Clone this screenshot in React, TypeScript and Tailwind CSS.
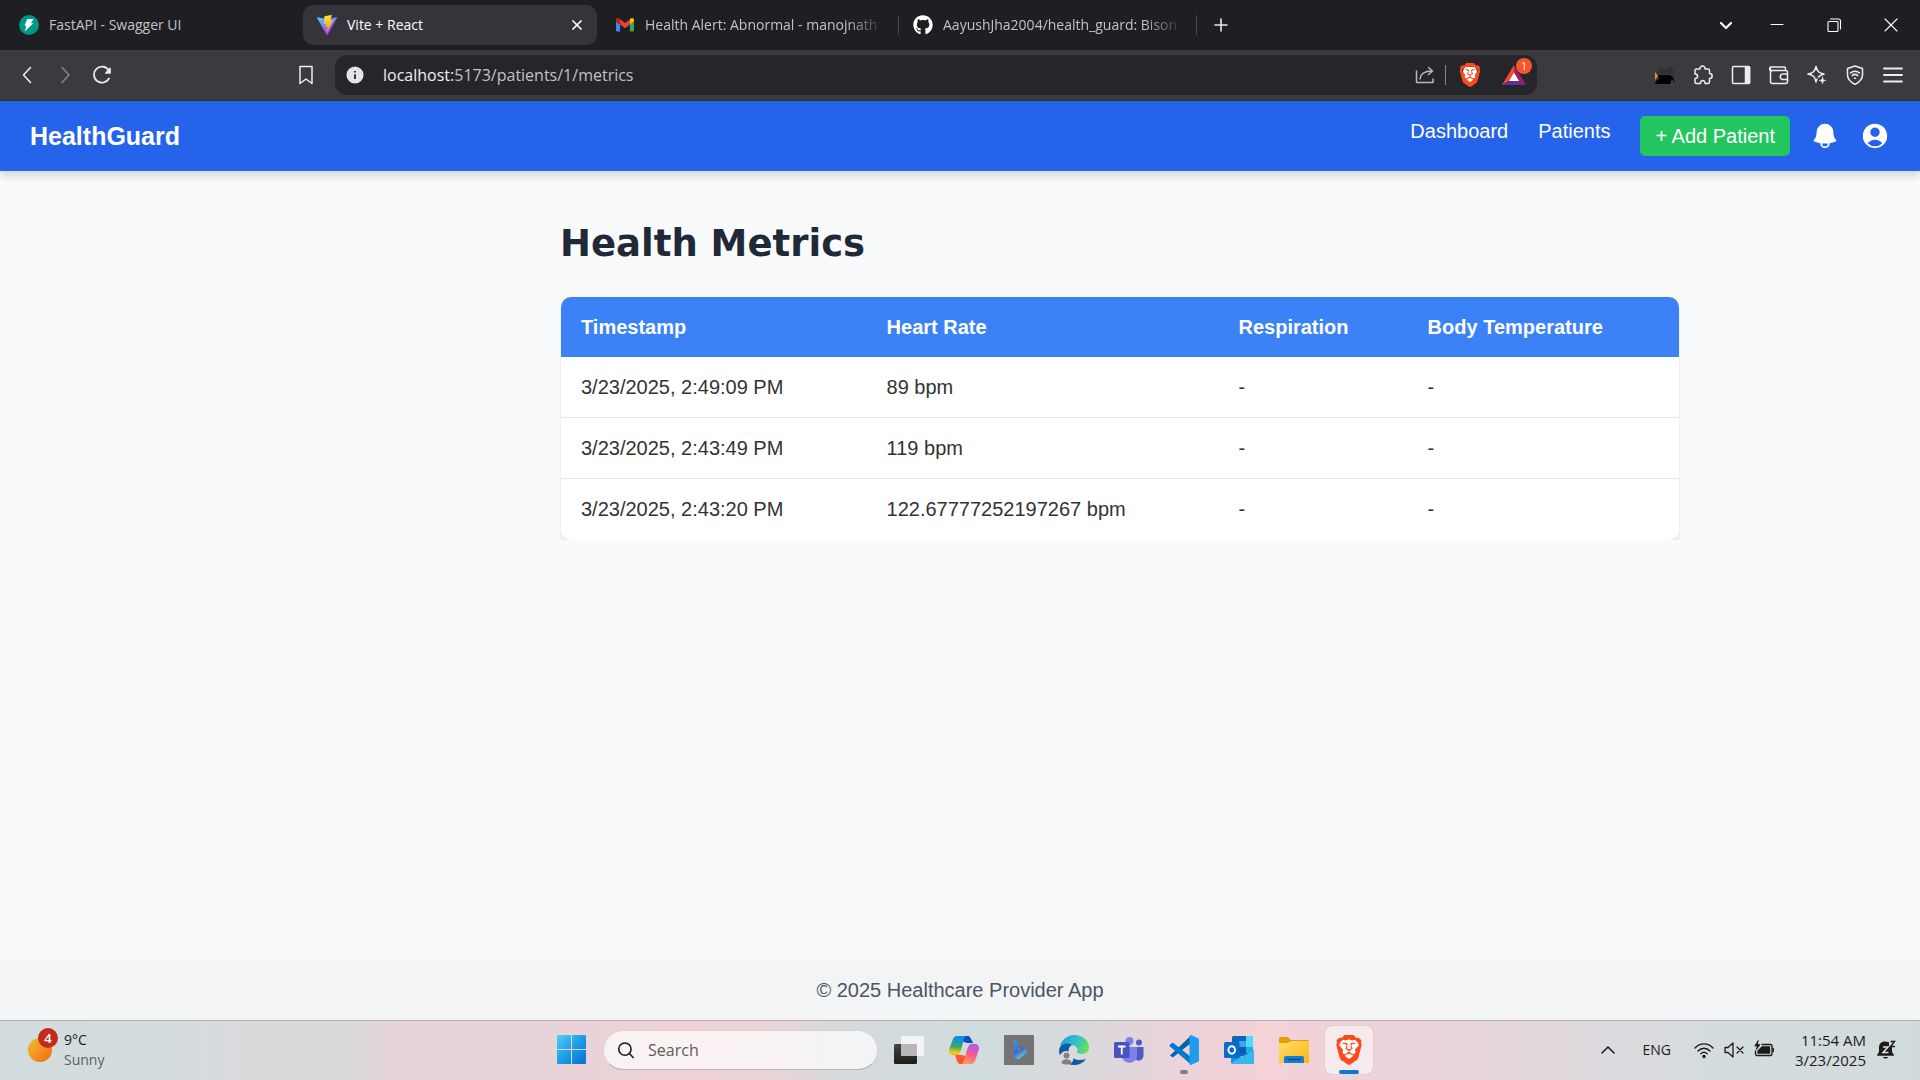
import React from "react";
import { HiBell, HiUserCircle } from "react-icons/hi2";
import { FaGithub } from "react-icons/fa";
import { SiBrave } from "react-icons/si";

const metrics = [
  { time: "3/23/2025, 2:49:09 PM", heart: "89 bpm", respiration: "-", temperature: "-" },
  { time: "3/23/2025, 2:43:49 PM", heart: "119 bpm", respiration: "-", temperature: "-" },
  { time: "3/23/2025, 2:43:20 PM", heart: "122.67777252197267 bpm", respiration: "-", temperature: "-" },
];

type StrokeProps = {
  children: React.ReactNode;
  className?: string;
  width?: number;
};

function Stroke({ children, className = "size-5", width = 1.5 }: StrokeProps) {
  return (
    <svg
      viewBox="0 0 20 20"
      className={className}
      fill="none"
      stroke="currentColor"
      strokeWidth={width}
      strokeLinecap="round"
      strokeLinejoin="round"
      aria-hidden="true"
    >
      {children}
    </svg>
  );
}

function FastApiLogo() {
  return (
    <svg viewBox="0 0 20 20" className="size-5" aria-hidden="true">
      <circle cx="10" cy="10" r="10" fill="#009688" />
      <path d="M8.2 4h6.6l-3 4.2h2.6L5.6 16.4l1.8-5.6H5.6z" fill="#fff" />
    </svg>
  );
}

function ViteLogo() {
  return (
    <svg viewBox="0 0 256 257" className="size-5" aria-hidden="true">
      <defs>
        <linearGradient id="viteBody" x1="0" y1="0.08" x2="0.6" y2="0.9">
          <stop offset="0" stopColor="#41D1FF" />
          <stop offset="1" stopColor="#BD34FE" />
        </linearGradient>
        <linearGradient id="viteBolt" x1="0.43" y1="0" x2="0.5" y2="0.9">
          <stop offset="0" stopColor="#FFEA83" />
          <stop offset="0.1" stopColor="#FFDD35" />
          <stop offset="1" stopColor="#FFA800" />
        </linearGradient>
      </defs>
      <path
        fill="url(#viteBody)"
        d="M255.153 37.938L134.897 252.976c-2.483 4.44-8.862 4.466-11.382.048L.875 37.958c-2.746-4.814 1.371-10.646 6.827-9.67l120.385 21.517a6.537 6.537 0 0 0 2.322-.004l117.867-21.483c5.438-.991 9.574 4.796 6.877 9.62Z"
      />
      <path
        fill="url(#viteBolt)"
        d="M185.432.063L96.44 17.501a3.268 3.268 0 0 0-2.634 3.014l-5.474 92.456a3.268 3.268 0 0 0 3.997 3.378l24.777-5.718c2.318-.535 4.413 1.507 3.936 3.838l-7.361 36.047c-.495 2.426 1.782 4.5 4.151 3.78l15.304-4.649c2.372-.72 4.652 1.36 4.15 3.788l-11.698 56.621c-.732 3.542 3.979 5.473 5.943 2.437l1.313-2.028l72.516-144.72c1.215-2.423-.88-5.186-3.54-4.672l-25.505 4.922c-2.396.462-4.435-1.77-3.759-4.114l16.646-57.705c.677-2.35-1.37-4.583-3.769-4.113Z"
      />
    </svg>
  );
}

function GmailLogo() {
  return (
    <svg viewBox="52 42 88 66" className="w-[18px]" aria-hidden="true">
      <path fill="#4285f4" d="M58 108h14V74L52 59v43c0 3.32 2.69 6 6 6" />
      <path fill="#34a853" d="M120 108h14c3.32 0 6-2.69 6-6V59l-20 15" />
      <path fill="#fbbc04" d="M120 48v26l20-15v-8c0-7.42-8.47-11.65-14.4-7.2" />
      <path fill="#ea4335" d="M72 74V48l24 18 24-18v26L96 92" />
      <path fill="#c5221f" d="M52 51v8l20 15V48l-5.6-4.2c-5.94-4.45-14.4-.22-14.4 7.2" />
    </svg>
  );
}

function BraveLogo({ large = false }: { large?: boolean }) {
  return (
    <span className={large ? "grid size-[30px] place-items-center" : "grid size-6 place-items-center"}>
      <svg viewBox="0 0 24 24" className="col-start-1 row-start-1 size-full" aria-hidden="true">
        <path d="M7 4h10l2 4-1.500 9L12 21l-5.500-4L5 8z" fill="#fff" />
      </svg>
      <SiBrave className="col-start-1 row-start-1 size-full text-[#fb4b1b]" aria-hidden="true" />
    </span>
  );
}

type TabProps = {
  icon: React.ReactNode;
  title: string;
  active?: boolean;
  faded?: boolean;
  divider?: boolean;
};

function Tab({ icon, title, active = false, faded = false, divider = false }: TabProps) {
  return (
    <div
      className={
        active
          ? "flex h-10 w-[294px] items-center gap-2.5 rounded-[10px] bg-[#35343a] pl-[14px] pr-2.5 text-white"
          : "relative flex h-10 w-[294px] items-center gap-2.5 pl-[14px] pr-2.5 text-[#c3c2c7]"
      }
    >
      <span className="grid w-5 shrink-0 place-items-center">{icon}</span>
      <span
        className={
          faded
            ? "flex-1 overflow-hidden whitespace-nowrap [mask-image:linear-gradient(to_right,black_84%,transparent)]"
            : "flex-1 overflow-hidden whitespace-nowrap"
        }
      >
        {title}
      </span>
      {active && (
        <button aria-label="Close tab" className="grid size-5 place-items-center">
          <Stroke className="size-4" width={2.2}>
            <path d="M5 5l10 10M15 5L5 15" />
          </Stroke>
        </button>
      )}
      {divider && <span className="absolute -right-1 h-5 w-px bg-[#46454b]" />}
    </div>
  );
}

function TabStrip() {
  return (
    <div className="flex h-[50px] items-center bg-[#1f1e23] pl-[5px] text-sm text-[#e8e8ea]">
      <div className="flex items-center gap-1">
        <Tab icon={<FastApiLogo />} title="FastAPI - Swagger UI" />
        <Tab icon={<ViteLogo />} title="Vite + React" active />
        <Tab icon={<GmailLogo />} title="Health Alert: Abnormal - manojnath" faded divider />
        <Tab icon={<FaGithub className="size-5 text-white" />} title="AayushJha2004/health_guard: Bison" faded divider />
        <button aria-label="New tab" className="ml-2.5 grid size-7 place-items-center">
          <Stroke className="size-5" width={1.6}>
            <path d="M10 4v12M4 10h12" />
          </Stroke>
        </button>
      </div>
      <div className="ml-auto flex items-center text-white">
        <button aria-label="Search tabs" className="grid w-11 place-items-center">
          <Stroke width={2.2}>
            <path d="M5 8l5 5 5-5" />
          </Stroke>
        </button>
        <button aria-label="Minimize" className="grid w-[58px] place-items-center">
          <Stroke width={1.1}>
            <path d="M4 9.500h12" />
          </Stroke>
        </button>
        <button aria-label="Restore" className="grid w-14 place-items-center">
          <Stroke width={1.1}>
            <rect x="4" y="6.500" width="10" height="10" rx="1" />
            <path d="M6.500 4H14.500a2 2 0 0 1 2 2v8" />
          </Stroke>
        </button>
        <button aria-label="Close" className="grid w-[58px] place-items-center">
          <Stroke width={1.1}>
            <path d="M4 4l12 12M16 4L4 16" />
          </Stroke>
        </button>
      </div>
    </div>
  );
}

function AddressBar() {
  return (
    <div className="flex h-10 flex-1 items-center rounded-xl bg-[#26252a] px-[11px]">
      <svg viewBox="0 0 20 20" className="size-[18px] shrink-0" aria-hidden="true">
        <circle cx="10" cy="10" r="9.500" fill="#e4e3e8" />
        <path d="M10 9.200v5.300M10 5.500v1.600" stroke="#26252a" strokeWidth="2" />
      </svg>
      <p className="ml-[19px] flex-1 whitespace-nowrap text-base text-[#c3c2c7]">
        <span className="text-[#f0f0f3]">localhost:</span>5173/patients/1/metrics
      </p>
      <button aria-label="Share" className="text-[#b9b8bd]">
        <Stroke>
          <path d="M1.500 6v11.500h16.500V14M5 14c.5-5 3.500-8 12-8M13.500 2.500L17.500 6l-4 3.500" />
        </Stroke>
      </button>
      <span className="ml-2.5 h-5 w-px bg-[#87868b]" />
      <button aria-label="Brave Shields" className="ml-3">
        <BraveLogo />
      </button>
      <button aria-label="Brave Rewards, 1 notification" className="relative ml-5">
        <svg viewBox="0 0 24 22" className="w-6" aria-hidden="true">
          <path d="M12 1L0 21l7-4 5-8.500z" fill="#ff4724" />
          <path d="M12 1l12 20-7-4-5-8.500z" fill="#9e1f63" />
          <path d="M0 21h24l-7-4.500H7z" fill="#662d91" />
          <path d="M12 8.500L17 17H7z" fill="#fff" />
        </svg>
        <span className="absolute -right-1.5 -top-1.5 grid size-4 place-items-center rounded-full bg-[#fb542b] text-[10px] leading-none text-white">
          1
        </span>
      </button>
    </div>
  );
}

function Toolbar() {
  return (
    <div className="flex h-[51px] items-center border-b border-[#2f2e33] bg-[#3b3a3f] text-[#ededf0]">
      <div className="flex items-center gap-[18px] pl-[17px]">
        <button aria-label="Back">
          <Stroke width={1.6}>
            <path d="M13.500 2.500L6.500 10l7 7.500" />
          </Stroke>
        </button>
        <button aria-label="Forward" className="text-[#85848a]">
          <Stroke width={1.6}>
            <path d="M7 2.500l7 7.500-7 7.500" />
          </Stroke>
        </button>
        <button aria-label="Reload">
          <Stroke width={1.7}>
            <path d="M16 13.500A8 8 0 1 1 15.500 5" />
            <path d="M17 3.500v4.500h-4z" fill="currentColor" />
          </Stroke>
        </button>
      </div>
      <button aria-label="Bookmark this tab" className="ml-[183px] mr-[19px]">
        <Stroke width={1.5}>
          <path d="M4 1.500h12v17L10 14l-6 4.500z" />
        </Stroke>
      </button>
      <AddressBar />
      <div className="ml-[118px] mr-[17px] flex items-center gap-[18px]">
        <button aria-label="Extension">
          <svg viewBox="0 0 20 20" className="size-5" aria-hidden="true">
            <path d="M1 8l5-5 4 2 5-3 3 3 2 4H2z" fill="#313134" />
            <path d="M0 7l3 4-3 4z" fill="#f28c1c" />
            <path d="M3 10h12l3 2 2 6-3-4-2 5H0l1-3 3-2z" fill="#000" />
          </svg>
        </button>
        <button aria-label="Extensions">
          <Stroke>
            <path d="M2 5.500a1.500 1.500 0 0 1 1.500-1.500H7c-.5-4 5.500-4 5 0h3a1.500 1.500 0 0 1 1.500 1.500v3c3.500 0 3.500 5 0 5v3.500a1.500 1.500 0 0 1-1.500 1.500h-3c.5-4-5-4-4.500 0h-4A1.500 1.500 0 0 1 2 17v-3.500c3.500 0 3.500-4.500 0-4.500z" />
          </Stroke>
        </button>
        <button aria-label="Sidebar">
          <Stroke>
            <rect x="1.500" y="1.500" width="17" height="17" rx="1" />
            <path d="M14.500 2h4v16h-4z" fill="currentColor" />
          </Stroke>
        </button>
        <button aria-label="Wallet">
          <Stroke>
            <path d="M1.500 3.500v13a2 2 0 0 0 2 2h13a2 2 0 0 0 2-2V7.500a2 2 0 0 0-2-2h-13a2 2 0 1 1 0-3.500H15a1.500 1.500 0 0 1 1.500 1.500v2M18.500 9h-5a2.800 2.800 0 0 0 0 5.500h5" />
          </Stroke>
        </button>
        <button aria-label="Leo AI">
          <Stroke>
            <path d="M9 1.500c1 5 3 6.500 8 7.500-3 .8-4.500 1.500-5.500 3M9 1.500C8 6.500 6 8 1 9c5 1 7 2.500 8 8 .3-1 .5-2 1-3" />
            <path d="M15.500 12c.3 2.500 1 3.200 3.500 3.500-2.500.3-3.200 1-3.500 3.500-.3-2.500-1-3.200-3.500-3.500 2.500-.3 3.200-1 3.500-3.500z" fill="currentColor" strokeWidth="0.5" />
          </Stroke>
        </button>
        <button aria-label="VPN">
          <Stroke>
            <path d="M10 1l7.500 2.500v6.500c0 4-3 7-7.500 9.500C5.500 17 2.500 14 2.500 10V3.500z" />
            <path d="M5.500 8c2.500-2.300 6.500-2.300 9 0M7.200 10.600c1.600-1.400 4-1.400 5.600 0M9.500 13.200h1" />
          </Stroke>
        </button>
        <button aria-label="Menu">
          <Stroke width={1.8}>
            <path d="M1 3.500h18M1 10h18M1 16.500h18" />
          </Stroke>
        </button>
      </div>
    </div>
  );
}

function SiteHeader() {
  return (
    <header className="flex h-[70px] items-center justify-between bg-[#2563eb] px-[30px] text-white shadow-[0_5px_8px_rgba(0,0,0,0.14)]">
      <a href="#home" className="text-[25px] font-bold leading-[35px]">
        HealthGuard
      </a>
      <div className="flex items-center gap-5">
        <nav className="flex items-start gap-[30px] text-xl leading-[30px]">
          <a href="#dashboard">Dashboard</a>
          <a href="#patients">Patients</a>
          <button className="h-10 rounded-[5px] bg-[#22c55e] px-[15px] leading-10">+ Add Patient</button>
        </nav>
        <button aria-label="Notifications">
          <HiBell className="size-[30px]" />
        </button>
        <button aria-label="Account">
          <HiUserCircle className="size-[30px]" />
        </button>
      </div>
    </header>
  );
}

function MetricsTable() {
  return (
    <div className="overflow-hidden px-px">
      <table className="w-full border-separate border-spacing-0 overflow-hidden rounded-[10px] bg-white text-left text-xl leading-[30px] text-[#333] shadow-lg">
        <thead className="bg-[#3b82f6] text-white">
          <tr>
            {["Timestamp", "Heart Rate", "Respiration", "Body Temperature"].map((label) => (
              <th key={label} scope="col" className="px-5 py-[15px] font-bold">
                {label}
              </th>
            ))}
          </tr>
        </thead>
        <tbody>
          {metrics.map((row) => (
            <tr key={row.time} className="border-[#e5e7eb] last:border-transparent *:border-b *:border-inherit *:px-5 *:py-[15px]">
              <td>{row.time}</td>
              <td>{row.heart}</td>
              <td>{row.respiration}</td>
              <td>{row.temperature}</td>
            </tr>
          ))}
        </tbody>
      </table>
    </div>
  );
}

type TaskButtonProps = {
  label: string;
  children: React.ReactNode;
  active?: boolean;
  running?: boolean;
};

function TaskButton({ label, children, active = false, running = false }: TaskButtonProps) {
  return (
    <button
      aria-label={label}
      className={
        active
          ? "relative grid size-12 place-items-center rounded-md bg-[#f6eaed] shadow-[0_0_1px_rgba(0,0,0,0.3)]"
          : "relative grid size-12 place-items-center rounded-md"
      }
    >
      {children}
      {active && <span className="absolute bottom-0 h-1 w-5 rounded-full bg-[#0a78d4]" />}
      {running && <span className="absolute bottom-0 h-1 w-2 rounded-full bg-[#857a7e]" />}
    </button>
  );
}

function AppIcons() {
  const icon = "size-[30px]";
  return (
    <>
      <TaskButton label="Task view">
        <svg viewBox="0 0 30 30" className={icon}>
          <defs>
            <linearGradient id="tvDark" x1="0" y1="0" x2="0" y2="1">
              <stop offset="0" stopColor="#454443" />
              <stop offset="1" stopColor="#1c1c1b" />
            </linearGradient>
          </defs>
          <rect x="0" y="9" width="23" height="20" rx="1.500" fill="url(#tvDark)" />
          <rect x="7" y="1" width="23" height="20" rx="1.500" fill="#f4f4f4" />
          <rect x="7" y="9" width="16" height="12" fill="#b7b7b7" />
        </svg>
      </TaskButton>
      <TaskButton label="Copilot">
        <svg viewBox="0 0 30 30" className={icon}>
          <defs>
            <linearGradient id="cpLeft" x1="0.3" y1="0" x2="0.2" y2="1">
              <stop offset="0.1" stopColor="#0d8ee9" />
              <stop offset="0.55" stopColor="#3ba863" />
              <stop offset="0.85" stopColor="#f0cd17" />
              <stop offset="1" stopColor="#f7b51a" />
            </linearGradient>
            <linearGradient id="cpRight" x1="0.7" y1="0" x2="0.4" y2="1">
              <stop offset="0" stopColor="#a95bf0" />
              <stop offset="0.5" stopColor="#f05b97" />
              <stop offset="1" stopColor="#ff9a55" />
            </linearGradient>
          </defs>
          <path d="M13 1h6c3 0 4 7 6 7h-7l-6-2z" fill="#0b4fc0" />
          <path d="M8 1h9c-3 2-4 14-7 19H4c-4 0-5-4-3-8L4 4c1-2 2-3 4-3z" fill="url(#cpLeft)" />
          <path d="M17 29H11c-3 0-4-7-5-9h7l5 2z" fill="#fb5735" />
          <path d="M22 29h-9c3-2 4-16 8-20h5c4 0 5 4 3 8l-3 9c-1 2-2 3-4 3z" fill="url(#cpRight)" />
        </svg>
      </TaskButton>
      <TaskButton label="Bing">
        <svg viewBox="0 0 30 30" className={icon}>
          <defs>
            <linearGradient id="bing" x1="0" y1="0" x2="0.4" y2="1">
              <stop offset="0" stopColor="#2ba5f5" />
              <stop offset="0.6" stopColor="#2b69e5" />
              <stop offset="1" stopColor="#62d0ee" />
            </linearGradient>
          </defs>
          <rect width="30" height="30" fill="#747474" />
          <path d="M10 5l3.500 1.500v13l6-3.500-3-1.500-1.500-4 6 2.500c2.500 1.500 2 4.500 0 6L14 24.500l-4-3z" fill="url(#bing)" />
        </svg>
      </TaskButton>
      <TaskButton label="Edge">
        <svg viewBox="0 0 30 30" className={icon}>
          <defs>
            <linearGradient id="edgeTop" x1="0" y1="0.3" x2="1" y2="0.6">
              <stop offset="0" stopColor="#1f9ede" />
              <stop offset="0.55" stopColor="#33c3c9" />
              <stop offset="1" stopColor="#6be44c" />
            </linearGradient>
          </defs>
          <path d="M1 11C3 4 9 0 15 0c9 0 15 6 15 12 0 5-4 7-7 7-4 0-5-1-5-2 2-3-1-7-6-7-5-1-9 0-11 1z" fill="url(#edgeTop)" />
          <path d="M0 15c1-6 8-8 13-5-4 2-4 6-2 10 3 5 9 6 16 4-3 4-7 6-12 6C6 30 0 23 0 15z" fill="#0d5cab" />
          <circle cx="7.500" cy="23" r="7" fill="#dedcdb" />
          <circle cx="7.500" cy="20.500" r="3" fill="#85807c" />
          <path d="M2.500 28c0-5 10-5 10 0-3 2-7 2-10 0z" fill="#85807c" />
        </svg>
      </TaskButton>
      <TaskButton label="Teams">
        <svg viewBox="0 0 30 30" className={icon}>
          <circle cx="15.500" cy="6" r="4" fill="#7b83eb" />
          <circle cx="25" cy="7.500" r="3" fill="#5059c9" />
          <path d="M20 12h9.500v8c0 6-6 7-8 4z" fill="#5059c9" />
          <path d="M8 12h15v9c0 9-15 9-15 0z" fill="#7b83eb" />
          <rect x="0" y="7" width="15.500" height="16" rx="1.500" fill="#4b53bc" />
          <path d="M4 11.500h7.500M7.750 11.500v8" stroke="#fff" strokeWidth="1.800" />
        </svg>
      </TaskButton>
      <TaskButton label="Visual Studio Code" running>
        <svg viewBox="0 0 30 30" className={icon}>
          <path d="M1 20.500l2 1.500c.5.300 1 .3 1.400 0L22 8V0.500z" fill="#0065a9" />
          <path d="M1 9.500l2-1.600c.5-.3 1-.3 1.400 0L22 22v7.500L1 11.500c-.6-.6-.6-1.400 0-2z" fill="#007acc" />
          <path d="M22 0l7 3.200c.6.300 1 .9 1 1.600v20.400c0 .7-.4 1.300-1 1.600L22 30c-1 0-1.500-.5-1.500-1.500v-27C20.500.5 21 0 22 0z" fill="#1f9cf0" />
        </svg>
      </TaskButton>
      <TaskButton label="Outlook">
        <svg viewBox="0 0 30 30" className={icon}>
          <rect x="8" y="1" width="21" height="20" rx="1.500" fill="#1066b5" />
          <path d="M15 6h7v6h-7z" fill="#32a9e7" />
          <path d="M22 1h7v11h-7z" fill="#50d9ff" />
          <path d="M15 12h7v6h-7z" fill="#0a5ca8" />
          <path d="M22 12h7v6h-7z" fill="#28a8ea" />
          <path d="M7 16l11 6 12-7v12c0 1-.5 2-2 2H9c-1.500 0-2-1-2-2z" fill="#1b93e0" />
          <path d="M7 28l23-13v12c0 1-.5 2-2 2H9z" fill="#35b8f1" />
          <rect x="0" y="7" width="15.500" height="16" rx="1.500" fill="#0a6cca" />
          <ellipse cx="7.750" cy="15" rx="3.300" ry="3.700" fill="none" stroke="#fff" strokeWidth="1.900" />
        </svg>
      </TaskButton>
      <TaskButton label="File Explorer">
        <svg viewBox="0 0 30 30" className={icon}>
          <defs>
            <linearGradient id="folder" x1="0" y1="0" x2="1" y2="1">
              <stop offset="0" stopColor="#ffdc70" />
              <stop offset="1" stopColor="#fbb90f" />
            </linearGradient>
          </defs>
          <path d="M0 3.500C0 2.700.7 2 1.500 2H9l3 3h17c.6 0 1 .4 1 1v4H0z" fill="#e09f05" />
          <path d="M0 8h9l3-2h18v21c0 .6-.4 1-1 1H1c-.6 0-1-.4-1-1z" fill="url(#folder)" />
          <path d="M5 28v-5a2 2 0 0 1 2-2h16a2 2 0 0 1 2 2v5z" fill="#1180d1" />
          <path d="M9 24.500h12" stroke="#0a4f8c" strokeWidth="1.500" strokeLinecap="round" />
        </svg>
      </TaskButton>
      <TaskButton label="Brave" active>
        <BraveLogo large />
      </TaskButton>
    </>
  );
}

function Taskbar() {
  return (
    <footer className="grid h-[60px] grid-cols-[1fr_auto_1fr] items-center border-t border-[#b2adb1] bg-[linear-gradient(to_right,#d2dcde_0%,#d3dddd_8%,#dadadd_13%,#d9dadb_18%,#e7d3d9_21%,#e7d3d9_28%,#efd2d6_36%,#ead4d7_40%,#d5dadd_44%,#d0dcdd_51%,#dbd8dc_57%,#ecd3d9_62%,#f4d2d8_66%,#ead3da_74%,#dfd9de_82%,#d5dcdf_89%,#d2dbdc_100%)] pb-0.5 text-sm text-[#1b1b1b]">
      <button className="flex items-center justify-self-start pl-7 text-left leading-5">
        <span className="relative mr-3 block size-6 rounded-full bg-gradient-to-br from-[#f0bd34] to-[#f2660d]">
          <span className="absolute -top-2.5 left-2.5 grid size-5 place-items-center rounded-full bg-[#c42b1c] text-[13px] font-semibold text-white">
            4
          </span>
        </span>
        <span>
          9°C
          <span className="block text-[#5c6163]">Sunny</span>
        </span>
      </button>
      <div className="flex items-center gap-[7px]">
        <TaskButton label="Start">
          <svg viewBox="0 0 29 29" className="size-[29px]">
            <defs>
              <linearGradient id="start" x1="0" y1="0" x2="1" y2="1">
                <stop offset="0" stopColor="#4fd0fb" />
                <stop offset="0.5" stopColor="#1b9ce6" />
                <stop offset="1" stopColor="#0472ce" />
              </linearGradient>
            </defs>
            <path d="M1 0h13v14H0V1a1 1 0 0 1 1-1zM15 0h13a1 1 0 0 1 1 1v13H15zM0 15h14v14H1a1 1 0 0 1-1-1zM15 15h14v13a1 1 0 0 1-1 1H15z" fill="url(#start)" />
          </svg>
        </TaskButton>
        <label className="flex h-10 w-[275px] items-center gap-3.5 rounded-full border border-b-[#b8b0b3] border-[#ddd0d4] bg-white/70 pl-[13px]">
          <Stroke width={1.8}>
            <circle cx="9" cy="9" r="7" />
            <path d="M14 14l4.500 4.500" />
          </Stroke>
          <input
            type="text"
            placeholder="Search"
            aria-label="Search"
            className="w-full min-w-0 bg-transparent text-base outline-none placeholder:text-[#5d5b5c]"
          />
        </label>
        <AppIcons />
      </div>
      <div className="flex items-center justify-self-end pr-6">
        <button aria-label="Show hidden icons" className="mr-6">
          <Stroke className="size-5" width={1.5}>
            <path d="M4 13l6-6 6 6" />
          </Stroke>
        </button>
        <span className="mr-[23px]">ENG</span>
        <button aria-label="Network, volume and battery" className="mr-[21px] flex items-center gap-2.5">
          <Stroke width={1.4}>
            <path d="M1 8c5-5.500 13-5.500 18 0M4 11c3.500-3.700 8.500-3.700 12 0M6.800 13.800c2-2 4.400-2 6.400 0" />
            <circle cx="10" cy="16.500" r="1" fill="currentColor" />
          </Stroke>
          <Stroke width={1.3}>
            <path d="M1 7.500h3l5-4.500v14l-5-4.500H1zM13 7l6 6M19 7l-6 6" />
          </Stroke>
          <Stroke width={1.3}>
            <path d="M8 4.500h8.500a1.500 1.500 0 0 1 1.500 1.500v8a1.500 1.500 0 0 1-1.500 1.500H3A1.500 1.500 0 0 1 1.500 14v-3" />
            <path d="M8 7h7.500v6H4v-2z" fill="currentColor" />
            <path d="M4 .8L.8 6h2.400L2.500 9.500 6 4.500H3.700z" fill="currentColor" strokeWidth="0.8" />
            <path d="M19.200 8.500v3" strokeWidth="1.600" />
          </Stroke>
        </button>
        <button className="text-right text-[15px] leading-5">
          11:54 AM
          <span className="block">3/23/2025</span>
        </button>
        <button aria-label="Notifications paused" className="ml-2.5">
          <svg viewBox="0 0 20 20" className="size-5" fill="none">
            <path d="M9 1.500c-4 0-6 2.500-6 6V12l-2 3v.8h17V15l-2-3V7.500c0-3-2-6-7-6z" fill="#1b1b1b" />
            <path d="M7 17h5c-.5 2-4.500 2-5 0z" fill="#1b1b1b" />
            <path d="M7 7h5l-5 5.500h5.500" stroke="#dfe5e6" strokeWidth="1.500" />
            <path d="M13 1h7v6h-7z" fill="#d4dcdd" />
            <path d="M14.500 1.500h4l-4 5h4.500" stroke="#1b1b1b" strokeWidth="1.400" />
          </svg>
        </button>
      </div>
    </footer>
  );
}

export default function App() {
  return (
    <div className="flex min-h-screen flex-col bg-[#f9fafc] font-['Open_Sans',sans-serif]">
      <TabStrip />
      <Toolbar />
      <div className="flex flex-1 flex-col font-['Liberation_Sans',Arial,sans-serif]">
        <SiteHeader />
        <main className="flex-1 pl-80">
          <section className="mx-auto max-w-[1120px] pt-[50px]">
            <h1 className="mb-[30px] font-['Arial_Black','DejaVu_Sans',sans-serif] text-[37px] font-extrabold leading-[46px] text-[#1f2937]">
              Health Metrics
            </h1>
            <MetricsTable />
          </section>
        </main>
        <p className="bg-[#f3f4f6] py-[15px] text-center text-xl leading-[30px] text-[#4b5563]">© 2025 Healthcare Provider App</p>
      </div>
      <Taskbar />
    </div>
  );
}
